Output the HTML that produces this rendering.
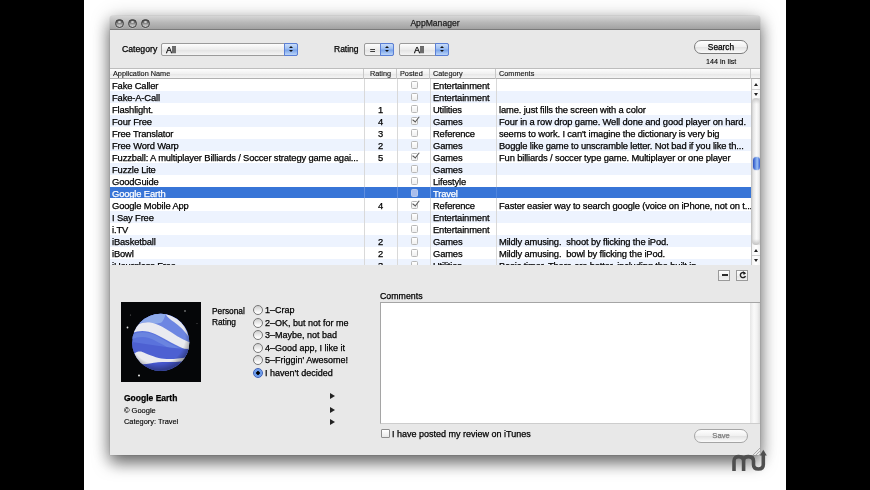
<!DOCTYPE html>
<html><head><meta charset="utf-8">
<style>
*{margin:0;padding:0;box-sizing:border-box}
html,body{width:870px;height:490px;overflow:hidden;background:#fff;font-family:"Liberation Sans",sans-serif;color:#000;-webkit-text-stroke:0.25px currentColor}
.a{position:absolute}
.t{position:absolute;white-space:nowrap;line-height:1}
#lb{left:0;top:0;width:84px;height:490px;background:#000}
#rb{left:786px;top:0;width:84px;height:490px;background:#000}
#win{will-change:transform;left:110px;top:16px;width:650px;height:439px;background:#e8e8e8;box-shadow:0 8px 16px rgba(0,0,0,.5),0 2px 20px rgba(0,0,0,.25),0 0 1px rgba(0,0,0,.5);border-radius:3px 3px 0 0;overflow:hidden}
#title{left:0;top:0;width:650px;height:14px;background:linear-gradient(#d6d6d6,#b8b8b8 50%,#a2a2a2);border-bottom:1px solid #7a7a7a}
.tl{position:absolute;top:3px;width:9px;height:9px;border-radius:50%;background:linear-gradient(#4e4e4e 0%,#777 40%,#b5b5b5 70%,#d0d0d0 100%);border:1px solid #3e3e3e;box-shadow:0 .5px 0 rgba(255,255,255,.35)}
.tl:after{content:"";position:absolute;left:2.2px;top:.5px;width:2.6px;height:2.2px;border-radius:50%;background:rgba(235,235,235,.75)}
.popup{position:absolute;height:13px;border:1px solid #9a9a9a;border-radius:2px;background:linear-gradient(#fdfdfd,#ececec 50%,#e2e2e2 51%,#f4f4f4)}
.pbl{position:absolute;top:-1px;right:-1px;width:14px;height:13px;border:1px solid #5a7fd6;border-radius:0 2px 2px 0;background:linear-gradient(#c9ddf9,#9abcf1 45%,#78a3ea 55%,#bcd5f7)}
.pbl:before{content:"";position:absolute;left:4.2px;top:1.6px;border-left:2.2px solid transparent;border-right:2.2px solid transparent;border-bottom:2.6px solid #111}
.pbl:after{content:"";position:absolute;left:4.2px;top:6px;border-left:2.2px solid transparent;border-right:2.2px solid transparent;border-top:2.6px solid #111}
.btn{position:absolute;border:1px solid #7b7b7b;border-radius:8px;background:linear-gradient(#fefefe,#f0f0f0 50%,#e3e3e3 52%,#fafafa)}
#hdr{left:0;top:52px;width:650px;height:11px;background:linear-gradient(#fdfdfd,#f1f1f1 50%,#e6e6e6 51%,#f4f4f4);border-top:1px solid #bdbdbd;border-bottom:1px solid #b0b0b0}
.hc{position:absolute;top:0;height:10px;border-right:1px solid #c8c8c8}
.ht{position:absolute;top:1px;font-size:7.3px;-webkit-text-stroke:.12px #000;white-space:nowrap;line-height:1;color:#1a1a1a}
#rows{left:0;top:63px;width:641px;height:186px;overflow:hidden;background:#fff}
.r{position:absolute;left:0;width:641px;height:12px}
.r.o{background:#edf3fe}
.r.s{background:#3875d7;color:#fff;height:11px;z-index:2}
.c{position:absolute;top:1.5px;font-size:9.4px;letter-spacing:-0.15px;line-height:10px;white-space:nowrap}
.vl{position:absolute;top:0;width:1px;height:186px;background:#d9d9d9}
.cb{position:absolute;left:301px;top:2px;width:7px;height:8px;border:1px solid #b8b8b8;border-radius:1.5px;background:linear-gradient(#fff,#f0f0f0)}
.ck:after{content:"";position:absolute;left:1.6px;top:-2.8px;width:2.6px;height:6px;border-right:1.2px solid #555;border-bottom:1.2px solid #555;transform:rotate(38deg)}
#sb{left:641px;top:63px;width:9px;height:186px;background:linear-gradient(90deg,#e8e8e8,#fdfdfd 40%,#f4f4f4 70%,#d8d8d8)}
.rad{position:absolute;left:142.5px;width:10px;height:10px;border-radius:50%;border:1px solid #777;background:linear-gradient(#cfcfcf,#e9e9e9 45%,#fbfbfb 80%,#fff)}
.rl{position:absolute;left:155px;font-size:9px;line-height:1;white-space:nowrap}
.arr{position:absolute;left:220px;width:0;height:0;border-top:3px solid transparent;border-bottom:3px solid transparent;border-left:5px solid #222}
</style></head><body>
<div id="lb" class="a"></div><div id="rb" class="a"></div>
<div id="win" class="a">
  <div id="title" class="a">
    <div class="tl" style="left:5px"></div>
    <div class="tl" style="left:18px"></div>
    <div class="tl" style="left:31px"></div>
    <div class="t" style="left:300px;top:3px;font-size:8.6px;width:50px;text-align:center;color:#222">AppManager</div>
  </div>
  <!-- toolbar -->
  <div class="t" style="left:12px;top:29px;font-size:8.7px">Category</div>
  <div class="popup" style="left:51px;top:27px;width:137px"><div class="t" style="left:4px;top:2px;font-size:9px">All</div><div class="pbl"></div></div>
  <div class="t" style="left:224px;top:29px;font-size:8.5px">Rating</div>
  <div class="popup" style="left:254px;top:27px;width:30px"><div class="t" style="left:5px;top:2px;font-size:9px">=</div><div class="pbl"></div></div>
  <div class="popup" style="left:289px;top:27px;width:50px"><div class="t" style="left:14px;top:2px;font-size:9px">All</div><div class="pbl"></div></div>
  <div class="btn" style="left:584px;top:24px;width:54px;height:14px"><div class="t" style="left:0;width:52px;text-align:center;top:2px;font-size:8.3px">Search</div></div>
  <div class="t" style="left:596px;top:42px;font-size:7.2px;-webkit-text-stroke:.1px #000">144 in list</div>

  <!-- table header -->
  <div id="hdr" class="a">
    <div class="hc" style="left:0;width:254px"></div>
    <div class="hc" style="left:254px;width:33px"></div>
    <div class="hc" style="left:287px;width:33px"></div>
    <div class="hc" style="left:320px;width:66px"></div>
    <div class="hc" style="left:386px;width:255px"></div>
    <div class="ht" style="left:3px">Application Name</div>
    <div class="ht" style="left:254px;width:33px;text-align:center">Rating</div>
    <div class="ht" style="left:290px">Posted</div>
    <div class="ht" style="left:323px">Category</div>
    <div class="ht" style="left:389px">Comments</div>
  </div>
  <div id="rows" class="a">
    <div class="r" style="top:0"><span class="c" style="left:2px">Fake Caller</span><span class="cb"></span><span class="c" style="left:323px">Entertainment</span></div>
    <div class="r o" style="top:12px"><span class="c" style="left:2px">Fake-A-Call</span><span class="cb"></span><span class="c" style="left:323px">Entertainment</span></div>
    <div class="r" style="top:24px"><span class="c" style="left:2px">Flashlight.</span><span class="c" style="left:268px">1</span><span class="cb"></span><span class="c" style="left:323px">Utilities</span><span class="c" style="left:389px">lame. just fills the screen with a color</span></div>
    <div class="r o" style="top:36px"><span class="c" style="left:2px">Four Free</span><span class="c" style="left:268px">4</span><span class="cb ck"></span><span class="c" style="left:323px">Games</span><span class="c" style="left:389px">Four in a row drop game. Well done and good player on hard.</span></div>
    <div class="r" style="top:48px"><span class="c" style="left:2px">Free Translator</span><span class="c" style="left:268px">3</span><span class="cb"></span><span class="c" style="left:323px">Reference</span><span class="c" style="left:389px">seems to work. I can't imagine the dictionary is very big</span></div>
    <div class="r o" style="top:60px"><span class="c" style="left:2px">Free Word Warp</span><span class="c" style="left:268px">2</span><span class="cb"></span><span class="c" style="left:323px">Games</span><span class="c" style="left:389px">Boggle like game to unscramble letter. Not bad if you like th...</span></div>
    <div class="r" style="top:72px"><span class="c" style="left:2px">Fuzzball: A multiplayer Billiards / Soccer strategy game agai...</span><span class="c" style="left:268px">5</span><span class="cb ck"></span><span class="c" style="left:323px">Games</span><span class="c" style="left:389px">Fun billiards / soccer type game. Multiplayer or one player</span></div>
    <div class="r o" style="top:84px"><span class="c" style="left:2px">Fuzzle Lite</span><span class="cb"></span><span class="c" style="left:323px">Games</span></div>
    <div class="r" style="top:96px"><span class="c" style="left:2px">GoodGuide</span><span class="cb"></span><span class="c" style="left:323px">Lifestyle</span></div>
    <div class="r s" style="top:108px"><span class="c" style="left:2px">Google Earth</span><span class="cb" style="border-color:#b8c9ee;background:#a9bdec"></span><i class="a" style="left:254px;top:0;width:1px;height:11px;background:#5f8fe0"></i><i class="a" style="left:287px;top:0;width:1px;height:11px;background:#5f8fe0"></i><i class="a" style="left:320px;top:0;width:1px;height:11px;background:#6f9ae3"></i><i class="a" style="left:386px;top:0;width:1px;height:11px;background:#4f85dc"></i><span class="c" style="left:323px">Travel</span></div>
    <div class="r" style="top:120px"><span class="c" style="left:2px">Google Mobile App</span><span class="c" style="left:268px">4</span><span class="cb ck"></span><span class="c" style="left:323px">Reference</span><span class="c" style="left:389px">Faster easier way to search google (voice on iPhone, not on t...</span></div>
    <div class="r o" style="top:132px"><span class="c" style="left:2px">I Say Free</span><span class="cb"></span><span class="c" style="left:323px">Entertainment</span></div>
    <div class="r" style="top:144px"><span class="c" style="left:2px">i.TV</span><span class="cb"></span><span class="c" style="left:323px">Entertainment</span></div>
    <div class="r o" style="top:156px"><span class="c" style="left:2px">iBasketball</span><span class="c" style="left:268px">2</span><span class="cb"></span><span class="c" style="left:323px">Games</span><span class="c" style="left:389px">Mildly amusing.&nbsp; shoot by flicking the iPod.</span></div>
    <div class="r" style="top:168px"><span class="c" style="left:2px">iBowl</span><span class="c" style="left:268px">2</span><span class="cb"></span><span class="c" style="left:323px">Games</span><span class="c" style="left:389px">Mildly amusing.&nbsp; bowl by flicking the iPod.</span></div>
    <div class="r o" style="top:180px"><span class="c" style="left:2px">iHourglass Free</span><span class="c" style="left:268px">3</span><span class="cb"></span><span class="c" style="left:323px">Utilities</span><span class="c" style="left:389px">Basic timer. There are better, including the built in</span></div>
    <div class="vl" style="left:254px"></div>
    <div class="vl" style="left:287px"></div>
    <div class="vl" style="left:320px"></div>
    <div class="vl" style="left:386px"></div>
  </div>
  <div id="sb" class="a">
    <div class="a" style="left:0;top:0;width:1px;height:186px;background:#c4c4c4"></div>
    <div class="a" style="left:1px;top:0;width:8px;height:19px;background:linear-gradient(90deg,#f4f4f4,#fff 50%,#f2f2f2)"></div>
    <div class="a" style="left:1px;top:10px;width:8px;height:1px;background:#d2d2d2"></div>
    <div class="a" style="left:2.5px;top:3.5px;border-left:2.5px solid transparent;border-right:2.5px solid transparent;border-bottom:3.8px solid #222"></div>
    <div class="a" style="left:2.5px;top:13.5px;border-left:2.5px solid transparent;border-right:2.5px solid transparent;border-top:3.8px solid #222"></div>
    <div class="a" style="left:1px;top:19px;width:8px;height:147px;border-radius:4px;background:linear-gradient(90deg,#d0d0d0,#e8e8e8 20%,#fafafa 55%,#f0f0f0 80%,#d8d8d8)"></div>
    <div class="a" style="left:1px;top:19px;width:8px;height:6px;border-radius:4px 4px 0 0;background:linear-gradient(#c8c8c8,rgba(220,220,220,0))"></div>
    <div class="a" style="left:1px;top:160px;width:8px;height:6px;border-radius:0 0 4px 4px;background:linear-gradient(rgba(220,220,220,0),#c0c0c0)"></div>
    <div class="a" style="left:1px;top:166px;width:8px;height:20px;background:linear-gradient(90deg,#f4f4f4,#fff 50%,#f2f2f2)"></div>
    <div class="a" style="left:1px;top:176px;width:8px;height:1px;background:#d2d2d2"></div>
    <div class="a" style="left:2.5px;top:169.5px;border-left:2.5px solid transparent;border-right:2.5px solid transparent;border-bottom:3.8px solid #222"></div>
    <div class="a" style="left:2.5px;top:179.5px;border-left:2.5px solid transparent;border-right:2.5px solid transparent;border-top:3.8px solid #222"></div>
    <div class="a" style="left:1.5px;top:78px;width:7px;height:13px;border-radius:3.5px;background:linear-gradient(90deg,#2a4fc0,#6f9ae8 40%,#9cc0f4 60%,#3760d0);box-shadow:0 0 1px #3b63c8"></div>
  </div>

  <div class="a" style="left:608px;top:254px;width:12px;height:11px;border:1px solid #9a9a9a;background:linear-gradient(#fdfdfd,#f2f2f2 50%,#e6e6e6 51%,#f0f0f0)"><div class="a" style="left:3px;top:3.2px;width:5.5px;height:1.9px;background:#2a2a2a"></div></div>
  <div class="a" style="left:626px;top:254px;width:12px;height:11px;border:1px solid #9a9a9a;background:linear-gradient(#fdfdfd,#f2f2f2 50%,#e6e6e6 51%,#f0f0f0)"><svg class="a" style="left:.5px;top:-1px" width="10" height="10" viewBox="0 0 10 10"><path d="M6.8 3.2A2.6 2.6 0 1 0 7.4 6" fill="none" stroke="#222" stroke-width="1.4"/><path d="M5 1.2L8.2 3.2L5.6 5Z" fill="#222"/></svg></div>

  <!-- image -->
  <svg width="80" height="80" viewBox="0 0 80 80" style="position:absolute;left:11px;top:286px">
<defs>
<clipPath id="gc"><circle cx="39.7" cy="40.4" r="28.6"/></clipPath>
<radialGradient id="gs" cx="45%" cy="40%" r="58%"><stop offset="82%" stop-color="#000" stop-opacity="0"/><stop offset="100%" stop-color="#000" stop-opacity=".3"/></radialGradient>
</defs>
<rect width="80" height="80" fill="#050608"/>
<g clip-path="url(#gc)">
<rect width="80" height="80" fill="#5a72dc"/>
<path d="M0 0H80V45L68 41C60 37 53 32 45 27C40 24 35 21.5 30 20.5C22 19.5 15 22 0 26Z" fill="#6d86e2"/>
<path d="M0 0H47C45 14 43 17 41 20C38 22 34 21.5 30 20.5C22 19.5 15 22 0 26Z" fill="#8eaaea"/>
<path d="M11 33C18 29 26 29.5 34 33C38 35 42 37.5 47 40.5L70 52V56L46 45C40 42 34 38 28 36C22 34 16 35 11 37Z" fill="#6a84e0"/>
<path d="M10 27.5C15 22 22 19.5 30 20.5C35 21.5 40 24 45 27C53 32 60 37 70 41L70 50C62 46.5 55 43 50 40.5C44 37 38.5 34 34 32C26 28.5 18 27.5 10 32Z" fill="#e9eaf0"/>
<path d="M0 39C15 40 30 43 45 45C55 46.5 65 47 80 47V56C60 56 50 57.5 45 57.7C35 56 25 52 0 50Z" fill="#4d60d2"/>
<path d="M0 58C20 64 30 62 37.7 60.1C45 60.1 55 60 80 57V80H0Z" fill="#4556cb"/><path d="M13 52C15.5 49.5 19 49.3 21.3 49.9C25 51.3 30 53.6 37.7 56C45 57.7 55 57.5 67 55L66 59C58 60 50 60.1 45 60.1C40 60.1 34 60.5 28.7 61.5C22 63 10 62 8 58Z" fill="#e9eaf0"/>

<path d="M44.5 12.2A28.6 28.6 0 0 1 67.4 34.5C64 29 58 23.5 53 20C50 17.8 47 15.8 44.5 12.2Z" fill="#e6e7ee"/>
</g>
<circle cx="39.7" cy="40.4" r="28.6" fill="url(#gs)"/>
<circle cx="6.5" cy="25.5" r=".9" fill="#ddd"/>
<circle cx="64" cy="9" r=".8" fill="#aaa"/>
<circle cx="18" cy="73.5" r="1" fill="#eee"/>
<circle cx="9.5" cy="13" r=".6" fill="#666"/>
<circle cx="76" cy="21.5" r=".5" fill="#666"/>
</svg>

  <div class="t" style="left:102px;top:291px;font-size:8.3px">Personal</div>
  <div class="t" style="left:102px;top:302px;font-size:8.3px">Rating</div>
  <div class="rad" style="top:289px"></div><div class="rl" style="top:290px">1–Crap</div>
  <div class="rad" style="top:301.6px"></div><div class="rl" style="top:302.6px">2–OK, but not for me</div>
  <div class="rad" style="top:314.2px"></div><div class="rl" style="top:315.2px">3–Maybe, not bad</div>
  <div class="rad" style="top:326.8px"></div><div class="rl" style="top:327.8px">4–Good app, I like it</div>
  <div class="rad" style="top:339.4px"></div><div class="rl" style="top:340.4px">5–Friggin' Awesome!</div>
  <div class="rad" style="top:352px;border-color:#3b5fb8;background:radial-gradient(circle,#000 0,#000 1.5px,#5b8fe6 2px,#9bbdf2 100%)"></div><div class="rl" style="top:353px">I haven't decided</div>

  <div class="t" style="left:14px;top:378px;font-size:8.5px;font-weight:bold">Google Earth</div>
  <div class="t" style="left:14px;top:391px;font-size:7.5px;-webkit-text-stroke:.12px #000">© Google</div>
  <div class="t" style="left:14px;top:402px;font-size:7.4px;-webkit-text-stroke:.12px #000">Category: Travel</div>
  <div class="arr" style="top:377px"></div>
  <div class="arr" style="top:391px"></div>
  <div class="arr" style="top:403px"></div>

  <div class="t" style="left:270px;top:276px;font-size:8.8px">Comments</div>
  <div class="a" style="left:270px;top:286px;width:380px;height:122px;background:#fff;border:1px solid #a5a5a5;border-bottom-color:#cdcdcd;border-right:none"></div>
  <div class="a" style="left:640px;top:287px;width:10px;height:120px;background:linear-gradient(90deg,#e6e6e6,#fafafa 40%,#f2f2f2 70%,#dcdcdc)"></div>

  <div class="a" style="left:271px;top:413px;width:9px;height:9px;border:1px solid #8c8c8c;border-radius:1px;background:linear-gradient(#fff,#e8e8e8)"></div>
  <div class="t" style="left:282px;top:414px;font-size:9px">I have posted my review on iTunes</div>
  <div class="btn" style="left:584px;top:413px;width:54px;height:14px;border-color:#a5a5a5"><div class="t" style="left:0;width:52px;text-align:center;top:2px;font-size:7.6px;color:#7d7d7d">Save</div></div>
  <svg class="a" style="left:642px;top:431px" width="8" height="8" viewBox="0 0 8 8"><path d="M8 1L1 8M8 4L4 8M8 7L7 8" stroke="#9a9a9a" stroke-width=".8"/></svg>
</div>
<svg class="a" style="left:726px;top:444px" width="46" height="32" viewBox="0 0 46 32"><path d="M8 27V17C8 13.8 10 12.6 12.8 12.6C15.6 12.6 17.6 13.8 17.6 17V27M17.6 17C17.6 13.8 19.6 12.6 22.5 12.6C25.5 12.6 27.5 13.8 27.5 17V20.5C27.5 23.5 29.6 25 32.4 25C35.2 25 37.3 23.5 37.3 20.5V10.5" fill="none" stroke="#4f4f4f" stroke-width="3.6"/><path d="M37.3 5.8L33.8 11.6H40.8Z" fill="#4f4f4f"/></svg>
</body></html>
